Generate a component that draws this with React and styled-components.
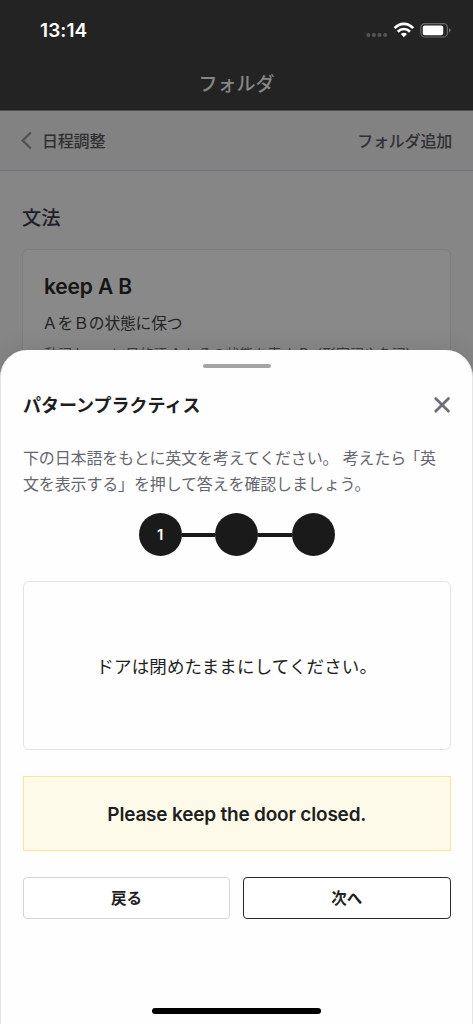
import React from "react";
import styled, { createGlobalStyle } from "styled-components";

const GlobalStyle = createGlobalStyle`
  * { box-sizing: border-box; }
  body {
    margin: 0;
    background: #858585;
    font-family: Inter, "Noto Sans CJK JP", sans-serif;
    color: #1f1f21;
  }
  h1, h2, h3, p { margin: 0; }
  button { font-family: inherit; color: inherit; padding: 0; cursor: pointer; }
`;

const Screen = styled.div`
  position: relative;
  width: 473px;
  height: 1024px;
  overflow: hidden;
  background: #868686;
`;

const TopBar = styled.header`
  height: 111px;
  background: #232323;
  border-bottom: 1px solid #4f4f4f;
`;

const StatusBar = styled.div`
  height: 58px;
  padding: 3px 22px 0 40px;
  display: flex;
  align-items: center;
  justify-content: space-between;
`;

const Clock = styled.span`
  font-size: 19px;
  line-height: 24px;
  font-weight: 600;
  letter-spacing: 0.1px;
  color: #fff;
`;

const ScreenTitle = styled.h1`
  text-align: center;
  font-size: 19px;
  font-weight: 500;
  line-height: 28px;
  margin-top: 13px;
  color: #868686;
`;

const NavBar = styled.nav`
  height: 60px;
  padding: 0 21px;
  display: flex;
  align-items: center;
  justify-content: space-between;
  background: #828282;
  border-bottom: 1px solid #737377;
`;

const NavButton = styled.button`
  display: flex;
  align-items: center;
  gap: 10px;
  border: 0;
  background: none;
  font-size: 16px;
  font-weight: 500;
  letter-spacing: -0.2px;
  line-height: 24px;
  color: #303032;
`;

const Content = styled.main`
  padding: 32px 22px 0;
`;

const SectionTitle = styled.h2`
  font-size: 19.3px;
  line-height: 30px;
  font-weight: 500;
  color: #1f1f2b;
`;

const GrammarCard = styled.article`
  margin-top: 16px;
  height: 300px;
  padding: 22px 21px;
  border: 1px solid #7d7d7d;
  border-radius: 6px;
  background: #898989;
`;

const GrammarTitle = styled.h3`
  font-size: 21px;
  line-height: 30px;
  font-weight: 600;
  letter-spacing: -0.15px;
  color: #151515;
`;

const GrammarMeaning = styled.p`
  margin: 10px 0 0 -2px;
  font-size: 15.8px;
  line-height: 24px;
  letter-spacing: -0.2px;
  color: #242426;
`;

const GrammarNote = styled.p`
  margin-top: 6px;
  font-size: 13.9px;
  line-height: 24px;
  white-space: nowrap;
  color: #3c3c42;
`;

const Sheet = styled.section`
  position: absolute;
  inset: 350px 0 0;
  padding: 14px 21.5px 0 22px;
  display: flex;
  flex-direction: column;
  background: #fefefe;
  border: solid #e4e4e4;
  border-width: 0 1px;
  border-radius: 27px 27px 0 0;
  box-shadow: 0 0 24px rgba(0, 0, 0, 0.12);
`;

const Grabber = styled.div`
  width: 68px;
  height: 4px;
  border-radius: 2px;
  background: #a3a5a5;
  align-self: center;
  flex: none;
`;

const SheetHeader = styled.div`
  margin-top: 23px;
  height: 30px;
  display: flex;
  align-items: center;
  justify-content: space-between;
`;

const SheetTitle = styled.h2`
  font-size: 18px;
  line-height: 30px;
  font-weight: 700;
`;

const CloseButton = styled.button`
  display: flex;
  margin-bottom: 2px;
  border: 0;
  background: none;
`;

const Instructions = styled.p`
  margin-top: 25px;
  font-size: 16px;
  line-height: 25.5px;
  letter-spacing: -0.15px;
  color: #66666e;
`;

const InstructionLine = styled.span`
  display: block;
  white-space: nowrap;
`;

const OpeningBracket = styled.span`
  margin-left: 6px;
  font-feature-settings: "halt";
`;

const Steps = styled.ol`
  list-style: none;
  margin: 16px 0 0;
  padding: 0;
  display: flex;
  justify-content: center;
  align-items: center;
`;

const Step = styled.li`
  width: 43px;
  height: 43px;
  border-radius: 50%;
  display: flex;
  align-items: center;
  justify-content: center;
  background: #1a1a1b;
  color: #fff;
  font-size: 15px;
  font-weight: 600;
`;

const Connector = styled.li`
  width: 33.5px;
  height: 4px;
  background: #1a1a1b;
`;

const PromptCard = styled.div`
  margin-top: 25px;
  height: 169px;
  display: flex;
  align-items: center;
  justify-content: center;
  border: 1px solid #e4e4e4;
  border-radius: 6px;
  font-size: 17.5px;
  letter-spacing: 0.15px;
`;

const Answer = styled.div`
  margin-top: 26px;
  height: 75px;
  padding-top: 2px;
  display: flex;
  align-items: center;
  justify-content: center;
  background: #fefaea;
  border: 1px solid #fce694;
  font-size: 19px;
  font-weight: 600;
  letter-spacing: -0.2px;
`;

const Actions = styled.div`
  margin-top: 26px;
  display: grid;
  grid-template-columns: 1fr 1fr;
  gap: 13px;
`;

const ActionButton = styled.button`
  height: 42px;
  padding-bottom: 2px;
  border: 1px solid ${(p) => (p.$primary ? "#2b2b2d" : "#d5d5d7")};
  border-radius: 4px;
  background: #fff;
  font-size: 15.5px;
  font-weight: 700;
`;

const HomeIndicator = styled.div`
  width: 169px;
  height: 6px;
  margin: auto auto 10px;
  border-radius: 3px;
  background: #000;
`;

const StatusIcons = () => (
  <svg width="85" height="18" viewBox="0 0 85 18">
    <g fill="#555">
      <circle cx="2.3" cy="13" r="2" />
      <circle cx="7.9" cy="13" r="2" />
      <circle cx="13.5" cy="13" r="2" />
      <circle cx="19.1" cy="13" r="2" />
    </g>
    <g fill="none" stroke="#fff" strokeWidth="2.7">
      <path d="M28.6 6.2C33.8 0.5 42 0.5 47.2 6.2" />
      <path d="M31.8 9.7C35.2 6.1 40.6 6.1 44 9.7" />
    </g>
    <path d="M34.8 12.1C36.5 10.4 39.3 10.4 41 12.1L37.9 15.2Z" fill="#fff" />
    <rect x="54.8" y="1.6" width="26.6" height="13.4" rx="4" fill="none" stroke="#6b6b6b" strokeWidth="1.2" />
    <rect x="56.8" y="3.5" width="20.4" height="9.7" rx="2" fill="#fff" />
    <path d="M83 6.2C85.2 7 85.2 9.7 83 10.5Z" fill="#777" />
  </svg>
);

const BackIcon = () => (
  <svg width="11" height="19" viewBox="0 0 11 19" fill="none" stroke="#515153" strokeWidth="2.3">
    <path d="M9.9 1.5L1.7 9.5L9.9 17.5" />
  </svg>
);

const CloseIcon = () => (
  <svg width="18" height="18" viewBox="0 0 18 18" fill="none" stroke="#6d6d79" strokeWidth="2.7" strokeLinecap="round">
    <path d="M2.7 2.5L15.5 15.3M15.5 2.5L2.7 15.3" />
  </svg>
);

export default function App() {
  return (
    <Screen>
      <GlobalStyle />
      <TopBar>
        <StatusBar>
          <Clock>13:14</Clock>
          <StatusIcons />
        </StatusBar>
        <ScreenTitle>フォルダ</ScreenTitle>
      </TopBar>
      <NavBar>
        <NavButton><BackIcon />日程調整</NavButton>
        <NavButton>フォルダ追加</NavButton>
      </NavBar>
      <Content>
        <SectionTitle>文法</SectionTitle>
        <GrammarCard>
          <GrammarTitle>keep A B</GrammarTitle>
          <GrammarMeaning>ＡをＢの状態に保つ</GrammarMeaning>
          <GrammarNote>動詞 keep に目的語 A とその状態を表す B（形容詞や名詞）</GrammarNote>
        </GrammarCard>
      </Content>
      <Sheet>
        <Grabber />
        <SheetHeader>
          <SheetTitle>パターンプラクティス</SheetTitle>
          <CloseButton aria-label="閉じる"><CloseIcon /></CloseButton>
        </SheetHeader>
        <Instructions>
          <InstructionLine>下の日本語をもとに英文を考えてください。 考えたら<OpeningBracket>「</OpeningBracket>英</InstructionLine>
          <InstructionLine>文を表示する」を押して答えを確認しましょう。</InstructionLine>
        </Instructions>
        <Steps>
          <Step>1</Step>
          <Connector />
          <Step />
          <Connector />
          <Step />
        </Steps>
        <PromptCard>ドアは閉めたままにしてください。</PromptCard>
        <Answer>Please keep the door closed.</Answer>
        <Actions>
          <ActionButton>戻る</ActionButton>
          <ActionButton $primary>次へ</ActionButton>
        </Actions>
        <HomeIndicator />
      </Sheet>
    </Screen>
  );
}
